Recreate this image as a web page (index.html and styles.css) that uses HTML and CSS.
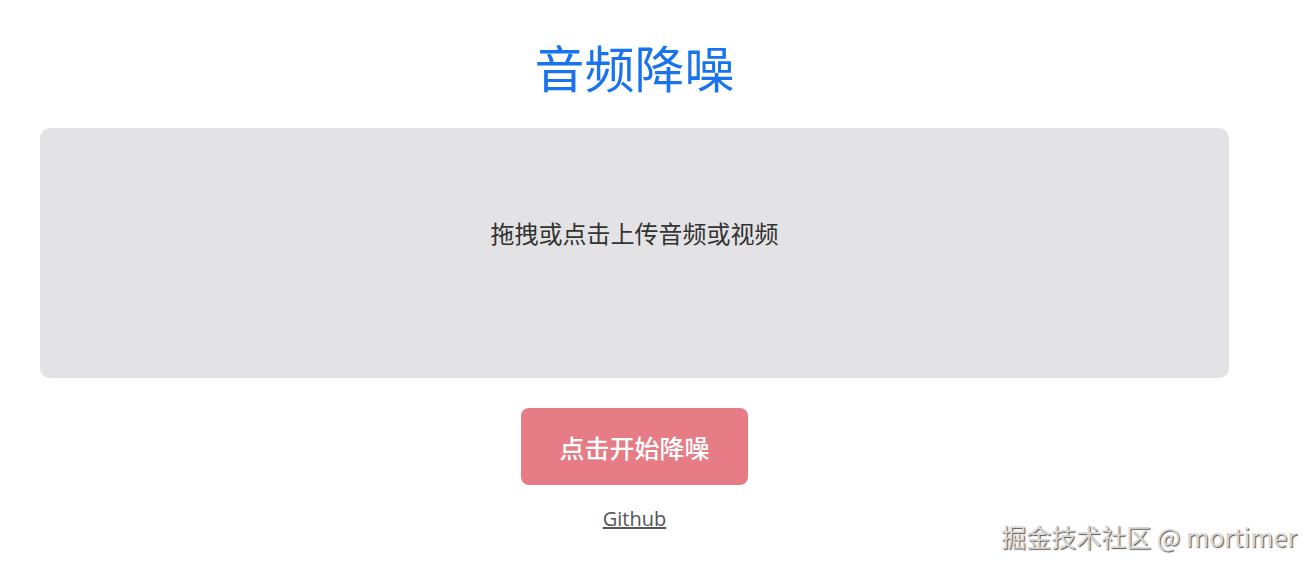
FILE: index.html
```html
<!DOCTYPE html>
<html lang="zh-CN">
<head>
  <meta charset="UTF-8" />
  <meta name="viewport" content="width=device-width, initial-scale=1.0" />
  <title>音频降噪</title>
  <link rel="stylesheet" href="styles.css">
</head>
<body>
  <div class="page">
    <h1 class="title">音频降噪</h1>

    <!-- 上传区域 -->
    <div class="upload-zone">
      <p class="upload-tip">拖拽或点击上传音频或视频</p>
    </div>

    <button class="start-button">点击开始降噪</button>

    <a class="repo-link" href="#">Github</a>
  </div>

  <div class="watermark">掘金技术社区 @ mortimer</div>
</body>
</html>
```

FILE: styles.css
```css
body {
  margin: 0;
  padding: 0;
  background: #ffffff;
  font-family: "Noto Sans CJK SC", "Noto Sans", sans-serif;
  height: 568px;
  overflow: hidden;
  position: relative;
}
.page {
  margin: 0 85px 0 40px;
  display: flex;
  flex-direction: column;
  align-items: center;
}
.title {
  margin: 34px 0 0;
  height: 94px;
  font-size: 50px;
  font-weight: normal;
  line-height: 64px;
  color: #1a73ee;
}
/* 上传区域 */
.upload-zone {
  box-sizing: border-box;
  width: 100%;
  height: 250px;
  background-color: #e3e3e5;
  border-radius: 10px;
  padding-top: 89px;
  text-align: center;
}
.upload-tip {
  margin: 0;
  font-size: 24px;
  line-height: 32px;
  color: #333333;
}
.start-button {
  margin-top: 30px;
  width: 227px;
  height: 77px;
  border: none;
  border-radius: 8px;
  background-color: #e67c85;
  color: #ffffff;
  font-family: inherit;
  font-size: 25px;
  font-weight: 500;
  cursor: pointer;
}
.repo-link {
  margin-top: 20px;
  font-family: "Open Sans", "Noto Sans", sans-serif;
  font-size: 20px;
  line-height: 28px;
  color: #555555;
}
.watermark {
  position: absolute;
  right: 17px;
  bottom: 16px;
  font-size: 25px;
  line-height: 32px;
  color: #d8d8d8;
  text-shadow: 1px 1px 1px #555555, -1px -1px 0 #ffffff;
}
```
